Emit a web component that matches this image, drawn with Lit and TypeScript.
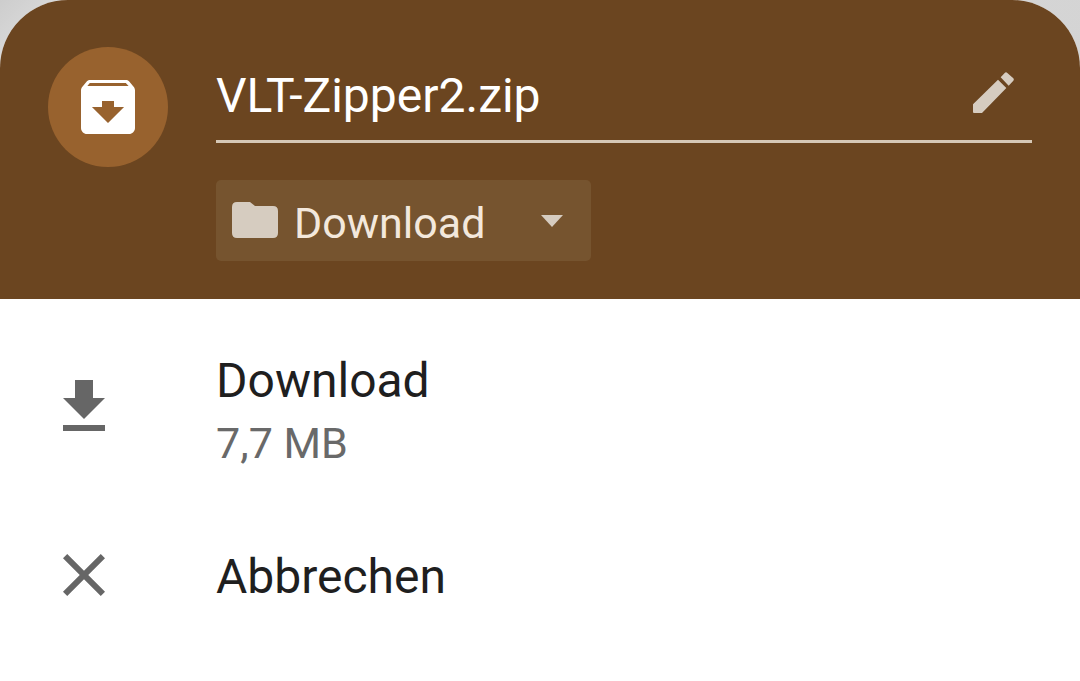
import { LitElement, html, css, svg } from "lit";
import { customElement, state } from "lit/decorators.js";

const downloadIcon = svg`<path d="M19 9h-4V3H9v6H5l7 7 7-7zM5 18v2h14v-2H5z"/>`;
const closeIcon = svg`<path d="M19 6.41L17.59 5 12 10.59 6.41 5 5 6.41 10.59 12 5 17.59 6.41 19 12 13.41 17.59 19 19 17.59 13.41 12z"/>`;

@customElement("app-root")
export class AppRoot extends LitElement {
  @state() private fileName = "VLT-Zipper2.zip";

  static styles = css`
    :host {
      display: block;
      min-height: 100vh;
      background: linear-gradient(135deg, #cdcdcd, #d8d8d8 40px, #d2d2d2);
      font-family: Roboto, "Liberation Sans", sans-serif;
      color: #1f1f1f;
    }
    * {
      box-sizing: border-box;
    }
    svg {
      display: block;
      flex: none;
      fill: currentColor;
    }
    .sheet {
      min-height: 100vh;
      background: #fff;
      border-radius: 68px 68px 0 0;
      overflow: hidden;
    }
    header {
      display: grid;
      grid-template-columns: 120px minmax(0, 1fr);
      column-gap: 48px;
      align-items: start;
      padding: 47px 48px 38px;
      background: #6b4520;
    }
    .badge {
      display: grid;
      place-items: center;
      height: 120px;
      border-radius: 50%;
      background: #98622e;
      color: #fff;
    }
    .fields {
      display: flex;
      flex-direction: column;
      align-items: flex-start;
      gap: 37px;
    }
    .name {
      display: flex;
      align-items: center;
      width: 100%;
      height: 96px;
      padding: 0 18px 2px 0;
      border-bottom: 3px solid #d6c8b6;
      color: #d6ccc0;
    }
    .name input {
      flex: 1;
      min-width: 0;
      height: 70px;
      padding: 6px 0 0;
      border: 0;
      outline: 0;
      background: none;
      color: #fff;
      font: 48px/64px Roboto, "Liberation Sans", sans-serif;
    }
    .folder {
      display: grid;
      grid-template-columns: 46px auto;
      align-items: center;
      height: 81px;
      padding: 0 28px 0 16px;
      border-radius: 5px;
      background: #76542f;
      color: #d6ccc0;
    }
    .folder svg,
    .folder select {
      grid-row: 1;
    }
    .folder select {
      grid-column: 2;
      width: 285px;
      height: 81px;
      padding: 4px 0 0 16px;
      border: 0;
      outline: 0;
      appearance: none;
      background: none;
      color: #f3e8dc;
      font: 43px/60px Roboto, "Liberation Sans", sans-serif;
    }
    .caret {
      grid-column: 2;
      justify-self: end;
      pointer-events: none;
    }
    .actions {
      display: flex;
      flex-direction: column;
      padding-top: 26px;
    }
    .action {
      display: grid;
      grid-template-columns: 72px minmax(0, 1fr);
      column-gap: 96px;
      align-items: start;
      padding: 24px 48px;
      border: 0;
      background: none;
      color: inherit;
      text-align: left;
      font: 48px/64px Roboto, "Liberation Sans", sans-serif;
    }
    .action svg {
      color: #666;
    }
    .two-line svg {
      margin-top: 22px;
    }
    .one-line {
      align-items: center;
      padding-top: 42px;
    }
    .one-line .label {
      padding-top: 4px;
    }
    .label,
    .detail {
      display: block;
    }
    .detail {
      color: #696969;
      font-size: 43px;
      line-height: 60px;
    }
  `;

  render() {
    return html`
      <main class="sheet">
        <header>
          <div class="badge">
            <svg width="72" height="72" viewBox="0 0 24 24" aria-hidden="true">
              <path d="M20.54 5.23l-1.39-1.68C18.88 3.21 18.47 3 18 3H6c-.47 0-.88.21-1.16.55L3.46 5.23C3.17 5.57 3 6.02 3 6.5V19c0 1.1.9 2 2 2h14c1.1 0 2-.9 2-2V6.5c0-.48-.17-.93-.46-1.27zM12 17.35L6.65 12H10v-2h4v2h3.35L12 17.35zM5.12 5l.82-1h12l.93 1H5.12z"/>
            </svg>
          </div>
          <div class="fields">
            <label class="name">
              <input
                type="text"
                aria-label="Dateiname"
                .value=${this.fileName}
                @input=${(e: Event) => (this.fileName = (e.target as HTMLInputElement).value)}
              />
              <svg width="41" height="41" viewBox="98 217 123 123" aria-hidden="true">
                <path d="M98 314V337Q98 340 101 340H125L198 265L173 240ZM181 233L193 220Q197 216 201 220L219 236Q222 240 219 243L205 258Z"/>
              </svg>
            </label>
            <label class="folder">
              <svg width="46" height="38" viewBox="0 0 46 38" aria-hidden="true">
                <path d="M5 0H18L23 4H41Q46 4 46 9V31Q46 36 41 36H5Q0 36 0 31V5Q0 0 5 0Z"/>
              </svg>
              <select aria-label="Ordner">
                <option>Download</option>
              </select>
              <svg class="caret" width="22" height="12" viewBox="0 0 22 12" aria-hidden="true">
                <path d="M0 0H22L11 12Z"/>
              </svg>
            </label>
          </div>
        </header>
        <div class="actions">
          <button class="action two-line" type="button">
            <svg width="72" height="72" viewBox="0 0 24 24" aria-hidden="true">${downloadIcon}</svg>
            <span>
              <span class="label">Download</span>
              <span class="detail">7,7 MB</span>
            </span>
          </button>
          <button class="action one-line" type="button">
            <svg width="72" height="72" viewBox="0 0 24 24" aria-hidden="true">${closeIcon}</svg>
            <span class="label">Abbrechen</span>
          </button>
        </div>
      </main>
    `;
  }
}
